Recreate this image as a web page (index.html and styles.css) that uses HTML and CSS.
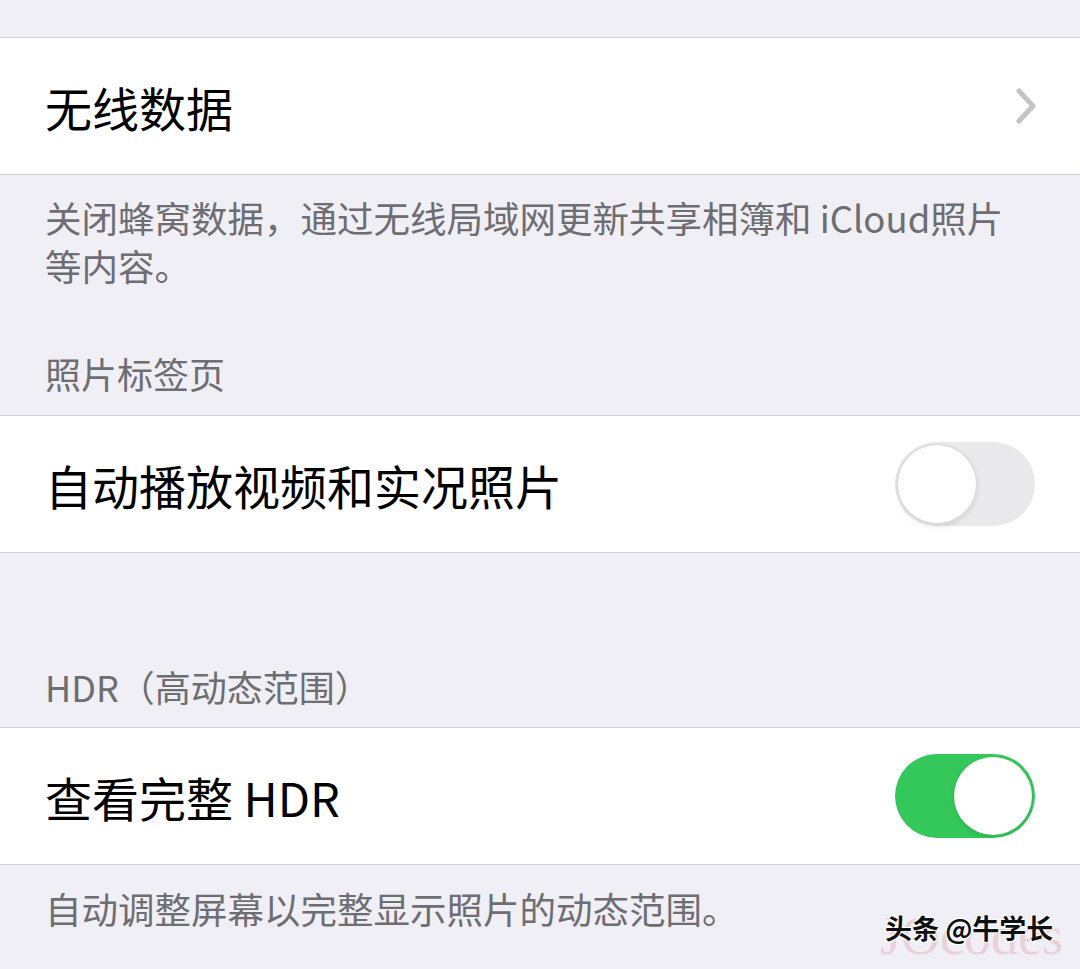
FILE: index.html
```html
<!DOCTYPE html>
<html lang="zh-CN">
<head>
  <meta charset="UTF-8">
  <title>照片设置</title>
  <link rel="stylesheet" href="styles.css">
</head>
<body>
  <div class="screen">
    <div class="gap-top"></div>

    <div class="cell">
      <span class="cell-title">无线数据</span>
      <svg class="chevron" width="22" height="36" viewBox="0 0 22 36">
        <path d="M3 3 L17 18 L3 33" fill="none" stroke="#c4c4c8" stroke-width="5" stroke-linecap="round" stroke-linejoin="round"/>
      </svg>
    </div>

    <div class="group-footer">
      <p class="note">关闭蜂窝数据，通过无线局域网更新共享相簿和 iCloud照片等内容。</p>
      <p class="section-head">照片标签页</p>
    </div>

    <div class="cell">
      <span class="cell-title">自动播放视频和实况照片</span>
      <div class="toggle"><div class="knob"></div></div>
    </div>

    <div class="group-gap">
      <p class="section-head">HDR（高动态范围）</p>
    </div>

    <div class="cell">
      <span class="cell-title">查看完整 HDR</span>
      <div class="toggle on"><div class="knob"></div></div>
    </div>

    <div class="group-bottom">
      <p class="note">自动调整屏幕以完整显示照片的动态范围。</p>
    </div>

    <div class="watermark">
      <span class="wm-back">JOcodes</span>
      <span class="wm-front">头条 @牛学长</span>
    </div>
  </div>
</body>
</html>
```

FILE: styles.css
```css
html, body {
  margin: 0;
  padding: 0;
}

body {
  background-color: #f0eff5;
  font-family: "Noto Sans CJK SC", "Noto Sans", sans-serif;
  overflow: hidden;
}

.screen {
  position: relative;
  width: 1080px;
  height: 969px;
  overflow: hidden;
}

.gap-top {
  height: 37px;
}

.cell {
  display: flex;
  align-items: center;
  justify-content: space-between;
  height: 136px;
  padding: 0 45px 0 45px;
  background-color: #fff;
  border-top: 1px solid #d2d1d6;
  border-bottom: 1px solid #d2d1d6;
  box-sizing: content-box;
}

.cell-title {
  font-size: 47px;
  color: #000;
  line-height: 1;
}

.chevron {
  margin-right: -3px;
}

.note {
  margin: 0;
  padding: 0 60px 0 45px;
  font-size: 36.5px;
  line-height: 48px;
  color: #6d6d72;
}

.section-head {
  margin: 0;
  padding: 0 45px;
  font-size: 36px;
  line-height: 48px;
  color: #6d6d72;
}

.group-footer {
  height: 240px;
  display: flex;
  flex-direction: column;
}

.group-footer .note {
  padding-top: 19px;
}

.group-footer .section-head {
  margin-top: auto;
  padding-bottom: 18px;
}

.group-gap {
  height: 174px;
  display: flex;
  flex-direction: column;
  justify-content: flex-end;
}

.group-gap .section-head {
  padding-bottom: 17px;
}

.group-bottom .note {
  padding-top: 20px;
}

.toggle {
  position: relative;
  width: 140px;
  height: 84px;
  border-radius: 42px;
  background-color: #e9e9eb;
}

.toggle .knob {
  position: absolute;
  top: 3px;
  left: 3px;
  width: 78px;
  height: 78px;
  border-radius: 50%;
  background-color: #fff;
  box-shadow: 0 0 0 1.5px #dcdcdc, 0 3px 6px rgba(0, 0, 0, 0.12);
}

.toggle.on {
  background-color: #34c759;
}

.toggle.on .knob {
  left: auto;
  right: 3px;
  box-shadow: 0 2px 5px rgba(0, 0, 0, 0.1);
}

.watermark {
  position: absolute;
  left: 882px;
  top: 908px;
  width: 190px;
  height: 56px;
  white-space: nowrap;
}

.wm-back {
  position: absolute;
  left: -2px;
  top: -4px;
  font-family: "Liberation Serif", serif;
  font-size: 54px;
  line-height: 1.2;
  color: rgba(226, 170, 180, 0.45);
}

.wm-front {
  position: absolute;
  left: 3px;
  top: 4px;
  font-size: 27px;
  font-weight: 700;
  line-height: 1.2;
  color: #111;
  text-shadow: 1px 1px 0 #fff, -1px -1px 0 #fff, 1px -1px 0 #fff, -1px 1px 0 #fff;
}
```
